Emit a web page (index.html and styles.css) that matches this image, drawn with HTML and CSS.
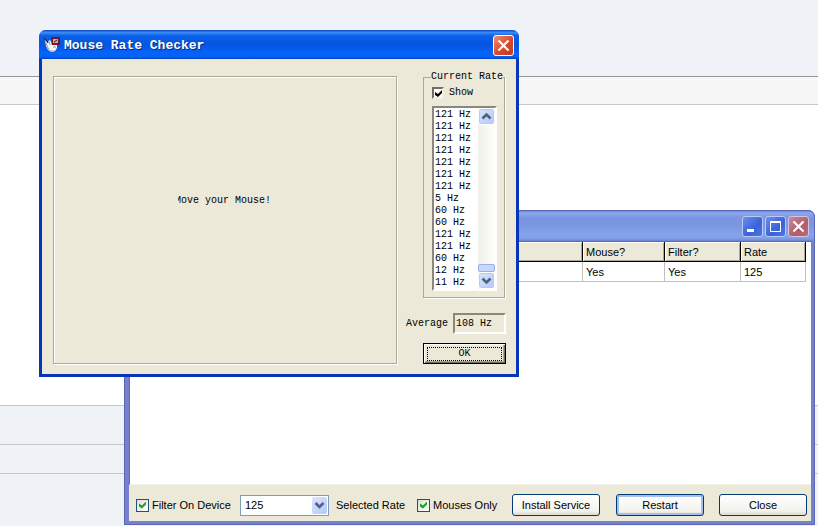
FILE: index.html
```html
<!DOCTYPE html>
<html lang="en">
<head>
  <meta charset="UTF-8" />
  <meta name="viewport" content="width=device-width, initial-scale=1.0"/>
  <title>Mouse Rate Checker</title>
  <link rel="stylesheet" href="styles.css">
</head>
<body>
  <div class="desktop">
    <div class="strip strip-top"></div>
    <div class="strip strip-bar"></div>
    <div class="strip strip-page"></div>
    <div class="strip strip-row"></div>
    <div class="strip strip-small"></div>
    <div class="strip strip-rest"></div>

    <section class="window device-window">
      <div class="titlebar">
        <button class="caption-btn" type="button" aria-label="Minimize">
          <svg viewBox="0 0 19 19"><path d="M4 12h7v3H4z" fill="#fff"/></svg>
        </button>
        <button class="caption-btn" type="button" aria-label="Maximize">
          <svg viewBox="0 0 19 19"><path d="M4 4h11v11H4zM5 6v8h9V6z" fill="#fff" fill-rule="evenodd"/></svg>
        </button>
        <button class="caption-btn close" type="button" aria-label="Close window">
          <svg viewBox="0 0 19 19"><path d="M4.500 4.500l10 10M14.500 4.500l-10 10" stroke="#fff" stroke-width="2.2"/></svg>
        </button>
      </div>
      <div class="grid-area">
        <table class="devices">
          <colgroup><col><col class="col-mouse"><col class="col-filter"><col class="col-rate"></colgroup>
          <tr><th></th><th>Mouse?</th><th>Filter?</th><th>Rate</th></tr>
          <tr><td></td><td>Yes</td><td>Yes</td><td>125</td></tr>
        </table>
      </div>
      <form class="toolbar">
        <label class="check"><input type="checkbox" checked><span>Filter On Device</span></label>
        <div class="combo">
          <select id="rate" aria-label="Selected Rate"><option>125</option></select>
          <svg class="combo-arrow" viewBox="0 0 15 17"><path d="M3.5 6l4 4 4-4" fill="none" stroke="#4d6185" stroke-width="2.6"/></svg>
        </div>
        <label for="rate">Selected Rate</label>
        <label class="check"><input type="checkbox" checked><span>Mouses Only</span></label>
        <button class="xp-btn" type="button">Install Service</button>
        <button class="xp-btn default" type="button">Restart</button>
        <button class="xp-btn" type="button">Close</button>
      </form>
    </section>

    <section class="window rate-window">
      <div class="titlebar">
        <svg class="app-icon" viewBox="0 0 16 16">
          <path d="M1 3l3 3 1-3 2 1 1 4 5 0 0 3-2 3-2 1H7l-3-2-2-4z" fill="#f4f4f4"/>
          <path d="M2 6l2 5 3 4M5 4l1 4M9 10l3 0M7 14l3 0" fill="none" stroke="#9a9aa8"/>
          <path d="M7 0h9v8H8z" fill="#6c1926"/>
          <path d="M9 2h5v4H9z" fill="#e0a4aa"/>
          <path d="M10 5l3-2" stroke="#3c1020"/>
          <path d="M0 1l2 2 2 3" fill="none" stroke="#161a3a"/>
        </svg>
        <h1>Mouse Rate Checker</h1>
        <button class="caption-btn close" type="button" aria-label="Close dialog">
          <svg viewBox="0 0 19 19"><path d="M4.500 4.500l10 10M14.500 4.500l-10 10" stroke="#fff" stroke-width="2.2"/></svg>
        </button>
      </div>
      <form class="dialog">
        <div class="test-area"><span class="prompt">Move your Mouse!</span></div>
        <div class="side">
          <fieldset class="current">
            <legend>Current Rate</legend>
            <label class="show"><input type="checkbox" checked><span>Show</span></label>
            <div class="listbox">
              <ul>
                <li>121 Hz</li>
                <li>121 Hz</li>
                <li>121 Hz</li>
                <li>121 Hz</li>
                <li>121 Hz</li>
                <li>121 Hz</li>
                <li>121 Hz</li>
                <li>5 Hz</li>
                <li>60 Hz</li>
                <li>60 Hz</li>
                <li>121 Hz</li>
                <li>121 Hz</li>
                <li>60 Hz</li>
                <li>12 Hz</li>
                <li>11 Hz</li>
              </ul>
              <div class="scrollbar">
                <button type="button" aria-label="Scroll up"><svg viewBox="0 0 15 15"><path d="M3.5 9.5l4-4 4 4" fill="none" stroke="#4d6185" stroke-width="2.6"/></svg></button>
                <div class="thumb"></div>
                <button type="button" aria-label="Scroll down"><svg viewBox="0 0 15 15"><path d="M3.5 5.5l4 4 4-4" fill="none" stroke="#4d6185" stroke-width="2.6"/></svg></button>
              </div>
            </div>
          </fieldset>
          <div class="average">
            <label for="avg">Average</label>
            <input type="text" id="avg" value="108 Hz" readonly>
          </div>
          <button class="ok-btn" type="button"><span>OK</span></button>
        </div>
      </form>
    </section>
  </div>
</body>
</html>
```

FILE: styles.css
```css
* {
  box-sizing: border-box;
}
body {
  margin: 0;
  font-family: "Liberation Sans", Arial, sans-serif;
  font-size: 11px;
  line-height: 14px;
  color: #000;
}
button, input, select {
  font: inherit;
  color: inherit;
  margin: 0;
  padding: 0;
}
svg {
  display: block;
}

/* page behind the windows */
.desktop {
  position: relative;
  display: flex;
  flex-direction: column;
  min-height: 100vh;
  overflow: hidden;
}
.strip {
  background: #eff3f8;
  border-bottom: 1px solid #c4c8ce;
}
.strip-top {
  height: 77px;
  border-color: #969696;
}
.strip-bar {
  height: 28px;
  background: #f7f7f7;
  border-color: #c8c8c8;
}
.strip-page {
  height: 301px;
  background: #fff;
}
.strip-row {
  height: 39px;
}
.strip-small {
  height: 29px;
}
.strip-rest {
  flex: 1;
  border: none;
}

/* windows */
.window {
  position: absolute;
  border-style: solid;
  border-top: none;
  border-radius: 7px 7px 0 0;
}
.titlebar {
  display: flex;
  align-items: center;
}
.caption-btn {
  width: 21px;
  height: 21px;
  border: 1px solid #fff;
  border-radius: 3px;
  background: linear-gradient(135deg, #6c8fec, #3a62d8 60%, #4b78e8);
}
.caption-btn.close {
  background: linear-gradient(135deg, #ec8f75, #d8492a 55%, #c23c1c);
}

/* device window */
.device-window {
  left: 124px;
  top: 210px;
  width: 691px;
  border-width: 0 4px 4px 5px;
  border-color: #7680cc;
  background: #ece9d8;
  outline: 1px solid #5a66b8;
  outline-offset: -1px;
}
.device-window .titlebar {
  height: 31px;
  margin: 0 -4px 0 -5px;
  padding: 2px 6px 0 0;
  justify-content: flex-end;
  gap: 2px;
  border-radius: 7px 7px 0 0;
  background: linear-gradient(#6079cf, #8fa9ef 10%, #7a94e0 25%, #7b97e2 50%, #83a4ec 80%, #7f9de6 93%, #6c80cc);
}
.device-window .caption-btn {
  border-color: #b9c9f5;
}
.device-window .close {
  border-color: #d9c3dc;
  background: linear-gradient(135deg, #c58b9e, #b05d6b 60%, #b56b78);
}
.grid-area {
  height: 244px;
  padding-right: 5px;
  background: #fff;
  border-top: 1px solid #716f64;
  border-left: 1px solid #716f64;
  border-bottom: 1px solid #f4f2e8;
}
.devices {
  width: 100%;
  table-layout: fixed;
  border-collapse: separate;
  border-spacing: 0;
}
.col-mouse {
  width: 82px;
}
.col-filter {
  width: 76px;
}
.col-rate {
  width: 65px;
}
.devices th, .devices td {
  height: 20px;
  padding: 0 3px;
  font-weight: normal;
  text-align: left;
  border-right: 1px solid #c0c0c0;
  border-bottom: 1px solid #c0c0c0;
}
.devices th {
  background: #ece9d8;
  border-color: #000;
  box-shadow: inset 1px 1px #fff, inset -1px -1px #aca899;
}
.toolbar {
  display: grid;
  grid-template-columns: 104px 96px 81px 95px 104px 103px 88px;
  align-items: center;
  height: 36px;
  padding: 4px 0 0 7px;
}
.check {
  display: flex;
  align-items: center;
  gap: 3px;
}
input[type="checkbox"] {
  appearance: none;
  width: 13px;
  height: 13px;
  border: 1px solid #1c5180;
  background: linear-gradient(135deg, #dcdcd7, #fff);
}
input[type="checkbox"]:checked::before {
  content: "";
  display: block;
  width: 7px;
  height: 7px;
  margin: 2px;
  background: #21a121;
  clip-path: polygon(0 2px, 3px 4px, 7px 0, 7px 3px, 3px 7px, 0 5px);
}
.combo {
  position: relative;
  width: 89px;
  height: 21px;
}
.combo select {
  appearance: none;
  display: block;
  width: 100%;
  height: 100%;
  padding: 0 4px;
  border: 1px solid #7f9db9;
  border-radius: 0;
  background: #fff;
}
.combo-arrow {
  position: absolute;
  top: 2px;
  right: 2px;
  width: 15px;
  height: 17px;
  border-radius: 2px;
  background: linear-gradient(135deg, #dbe5fd, #b3c8f6);
  pointer-events: none;
}
.xp-btn {
  width: 88px;
  height: 22px;
  border: 1px solid #003c74;
  border-radius: 3px;
  background: linear-gradient(#fff, #f3f2ec 80%, #dcd8cd);
}
.xp-btn.default {
  box-shadow: inset 0 0 0 2px #a6c0ee;
}

/* rate checker dialog */
.rate-window {
  left: 39px;
  top: 30px;
  width: 480px;
  border-width: 0 3px 3px;
  border-color: #0836b8;
  background: #ece9d8;
  font-family: "Liberation Mono", "Courier New", monospace;
  font-size: 10px;
  line-height: 12px;
}
.rate-window .titlebar {
  height: 29px;
  margin: 0 -3px;
  padding: 1px 5px 0;
  border-radius: 7px 7px 0 0;
  background: linear-gradient(#0a46c4, #3a8cf8 9%, #0a5fe8 20%, #0455e0 50%, #0564fa 80%, #0461f4 92%, #0342c0);
}
.rate-window h1 {
  flex: 1;
  margin: 0 0 0 4px;
  padding-top: 2px;
  font-size: 13px;
  line-height: 16px;
  color: #fff;
  text-shadow: 1px 1px #0a2a80;
}
.app-icon {
  width: 16px;
  height: 16px;
}
.dialog {
  display: flex;
  gap: 9px;
  padding: 12px 10px 10px 11px;
}
.test-area {
  flex: 1;
  display: flex;
  align-items: center;
  justify-content: center;
  margin-top: 5px;
  padding: 0 4px 38px 0;
  border: 1px solid #aca899;
  box-shadow: inset 1px 1px #fff, 1px 1px #fff;
}
.prompt {
  clip-path: inset(0 0 0 3px);
}
.side {
  display: flex;
  flex-direction: column;
  align-items: flex-end;
  width: 100px;
}
.current {
  width: 82px;
  min-width: 0;
  margin: 0 1px 0 0;
  padding: 4px 7px 6px 8px;
  border: 1px solid #aca899;
  box-shadow: 1px 1px #fff;
}
.current legend {
  margin-left: -1px;
  padding: 0;
  white-space: nowrap;
}
.show {
  display: flex;
  align-items: center;
  gap: 5px;
  height: 12px;
  margin-bottom: 7px;
}
.show input[type="checkbox"] {
  width: 12px;
  height: 12px;
  border: 2px solid;
  border-color: #716f64 #f1efe2 #f1efe2 #716f64;
  background: #fff;
}
.show input[type="checkbox"]:checked::before {
  margin: 1px;
  background: #000;
}
.listbox {
  display: flex;
  justify-content: space-between;
  width: 65px;
  border: 2px solid;
  border-color: #8a887c #fff #fff #8a887c;
  background: #fff;
}
.listbox ul {
  margin: 0;
  padding: 1px 0 0 1px;
  list-style: none;
  white-space: nowrap;
}
.scrollbar {
  display: flex;
  flex-direction: column;
  width: 17px;
  flex-shrink: 0;
  background: linear-gradient(90deg, #f0f0ea, #fefefb);
}
.scrollbar button {
  height: 17px;
  border: 1px solid #fff;
  border-radius: 3px;
  background: linear-gradient(135deg, #dbe5fd, #b3c8f6);
  box-shadow: inset 0 0 0 1px #b9cbf3;
}
.thumb {
  height: 8px;
  margin-top: auto;
  border: 1px solid #98b0e8;
  border-radius: 2px;
  background: #c8d8fb;
}
.average {
  display: flex;
  align-items: center;
  justify-content: space-between;
  width: 100%;
  margin: 15px 0 9px;
}
.average input {
  width: 53px;
  height: 21px;
  padding: 0 1px;
  border: 2px solid;
  border-color: #8a887c #fff #fff #8a887c;
  background: #ece9d8;
}
.ok-btn {
  width: 83px;
  height: 21px;
  padding: 2px;
  border: 1px solid #000;
  background: #ece9d8;
  box-shadow: inset 1px 1px #fff, inset -1px -1px #716f64, inset -2px -2px #aca899;
}
.ok-btn span {
  display: block;
  margin: 0 1px;
  border: 1px dotted #000;
}
```
